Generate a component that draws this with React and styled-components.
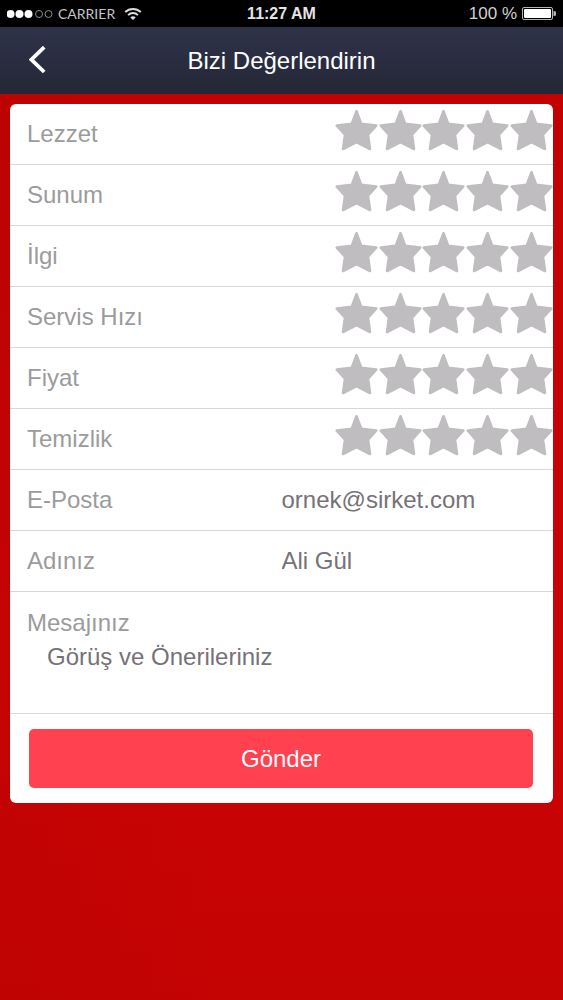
import React, { useState } from "react";
import styled, { createGlobalStyle } from "styled-components";

const GlobalStyle = createGlobalStyle`
  *, *::before, *::after { box-sizing: border-box; }
  body {
    margin: 0;
    background: #c60202;
    font-family: "Liberation Sans", Arial, sans-serif;
    font-size: 24px;
    line-height: 28px;
  }
`;

const Page = styled.div`
  display: flex;
  flex-direction: column;
  min-height: 100vh;
  background: linear-gradient(to right, rgba(150, 0, 0, 0.12), rgba(200, 0, 0, 0) 40%),
    linear-gradient(#c00202, #cb0303 70%, #c40303);
`;

const StatusBar = styled.div`
  display: grid;
  grid-template-columns: 1fr auto 1fr;
  align-items: center;
  height: 27px;
  padding: 0 7px;
  background: #000;
  color: #d2d2d2;
  font-size: 16px;
  line-height: 20px;
`;

const StatusGroup = styled.div`
  display: flex;
  align-items: center;
  justify-content: ${(p) => (p.$end ? "flex-end" : "flex-start")};
  gap: 5px;
`;

const Carrier = styled.span`
  padding-right: 4px;
  font-family: Lato, "Liberation Sans", sans-serif;
  font-size: 14px;
  color: #c4c4c4;
`;

const BatteryLevel = styled.span`
  font-size: 17px;
`;

const Clock = styled.time`
  font-weight: bold;
  color: #e4e4e4;
`;

const Header = styled.header`
  display: grid;
  grid-template-columns: 60px 1fr 60px;
  align-items: center;
  height: 67px;
  padding: 0 8px;
  background: linear-gradient(#2f334a, #242736);
`;

const BackButton = styled.button`
  display: flex;
  align-items: center;
  justify-content: center;
  height: 60px;
  padding: 0;
  border: 0;
  background: none;
  cursor: pointer;
`;

const Title = styled.h1`
  margin: 0;
  font-size: 24px;
  font-weight: normal;
  text-align: center;
  color: #fff;
`;

const Card = styled.form`
  margin: 10px;
  border-radius: 6px;
  overflow: hidden;
  background: #fff;
`;

const Row = styled.div`
  display: flex;
  align-items: center;
  height: 61px;
  border-bottom: 1px solid #d8d8da;
`;

const RatingRow = styled(Row).attrs({ role: "radiogroup" })`
  justify-content: space-between;
`;

const Caption = styled.span`
  padding-left: 17px;
  color: #9b9b9d;
`;

const FieldLabel = styled.label`
  flex: 1;
  padding-left: 17px;
  color: #9b9b9d;
`;

const TextField = styled.input`
  width: 50%;
  height: 60px;
  padding: 0;
  border: 0;
  outline: none;
  background: transparent;
  font: inherit;
  color: #69666b;
  &::placeholder { color: #757278; opacity: 1; }
`;

const Stars = styled.div`
  display: flex;
  width: 218px;
  padding-bottom: 8px;
`;

const StarLabel = styled.label`
  position: relative;
  display: flex;
  flex: 1;
  justify-content: center;
  cursor: pointer;
  color: ${(p) => (p.$on ? "#ff4150" : "#bfbdc0")};
`;

const StarRadio = styled.input`
  position: absolute;
  inset: 0;
  width: 100%;
  height: 100%;
  margin: 0;
  opacity: 0;
  cursor: pointer;
`;

const MessageBlock = styled.div`
  display: flex;
  flex-direction: column;
  height: 122px;
  padding-top: 17px;
  border-bottom: 1px solid #d9dcdf;
`;

const MessageLabel = styled.label`
  padding-left: 17px;
  color: #9b9b9d;
`;

const MessageArea = styled.textarea`
  height: 64px;
  padding: 6px 37px;
  border: 0;
  outline: none;
  background: transparent;
  font: inherit;
  color: #69666b;
  resize: none;
  &::placeholder { color: #757278; opacity: 1; }
`;

const Actions = styled.div`
  padding: 15px 20px 15px 19px;
`;

const SubmitButton = styled.button`
  display: block;
  width: 100%;
  height: 59px;
  border: 0;
  border-radius: 5px;
  background: #ff4150;
  color: #fff;
  font: inherit;
  cursor: pointer;
`;

function SignalDots() {
  return (
    <svg width="46" height="10" viewBox="0 0 46 10" aria-hidden="true">
      {[4, 13, 22].map((x) => (
        <circle key={x} cx={x - 0.5} cy="5" r="4" fill="#fff" />
      ))}
      {[32, 41.5].map((x) => (
        <circle key={x} cx={x} cy="5" r="3.5" fill="none" stroke="#8a8a8a" />
      ))}
    </svg>
  );
}

function WifiIcon() {
  return (
    <svg width="18" height="14" viewBox="0 0 18 14" aria-hidden="true">
      <g fill="none" stroke="#dcdcdc" strokeWidth="2">
        <path d="M1.2 5a11.3 11.3 0 0 1 15.6 0" />
        <path d="M4.1 8.100a7 7 0 0 1 9.8 0" />
      </g>
      <path d="M6.3 10.4a4 4 0 0 1 5.4 0L9 13z" fill="#dcdcdc" />
    </svg>
  );
}

function BatteryIcon() {
  return (
    <svg width="34" height="13" viewBox="0 0 34 13" aria-hidden="true">
      <rect x="0.5" y="0.5" width="30" height="12" rx="1.5" fill="none" stroke="#b5b5b5" />
      <rect x="2" y="2" width="27" height="9" rx="1" fill="#fff" />
      <path d="M31.5 4h1a1.5 1.5 0 0 1 1.5 1.5v2A1.5 1.5 0 0 1 32.5 9h-1z" fill="#b5b5b5" />
    </svg>
  );
}

function StarIcon() {
  return (
    <svg width="43" height="42" viewBox="0 0 43 42" aria-hidden="true">
      <path
        d="M21.5 2.3L26.2 14.8L41.2 16.6L33 25.6L35 40L21.500 33.1L8 40L10 25.6L1.8 16.6L16.8 14.8Z"
        fill="currentColor"
        stroke="currentColor"
        strokeWidth="2.6"
        strokeLinejoin="round"
      />
    </svg>
  );
}

function Rating({ name, label }) {
  const [value, setValue] = useState(0);
  return (
    <RatingRow aria-labelledby={`${name}-caption`}>
      <Caption id={`${name}-caption`}>{label}</Caption>
      <Stars>
        {[1, 2, 3, 4, 5].map((n) => (
          <StarLabel key={n} $on={n <= value}>
            <StarRadio
              type="radio"
              name={name}
              value={n}
              aria-label={`${label} ${n}`}
              checked={value === n}
              onChange={() => setValue(n)}
            />
            <StarIcon />
          </StarLabel>
        ))}
      </Stars>
    </RatingRow>
  );
}

const ratings = [
  ["lezzet", "Lezzet"],
  ["sunum", "Sunum"],
  ["ilgi", "İlgi"],
  ["servis", "Servis Hızı"],
  ["fiyat", "Fiyat"],
  ["temizlik", "Temizlik"],
];

export default function App() {
  return (
    <Page lang="tr">
      <GlobalStyle />
      <StatusBar>
        <StatusGroup>
          <SignalDots />
          <Carrier>CARRIER</Carrier>
          <WifiIcon />
        </StatusGroup>
        <Clock>11:27 AM</Clock>
        <StatusGroup $end>
          <BatteryLevel>100 %</BatteryLevel>
          <BatteryIcon />
        </StatusGroup>
      </StatusBar>
      <Header>
        <BackButton type="button" aria-label="Geri">
          <svg width="18" height="30" viewBox="0 0 18 30" aria-hidden="true">
            <path d="M15.2 1.2L2.4 13.6L15.2 26" fill="none" stroke="#fff" strokeWidth="3.8" />
          </svg>
        </BackButton>
        <Title>Bizi Değerlendirin</Title>
      </Header>
      <Card onSubmit={(e) => e.preventDefault()}>
        {ratings.map(([name, label]) => (
          <Rating key={name} name={name} label={label} />
        ))}
        <Row>
          <FieldLabel htmlFor="email">E-Posta</FieldLabel>
          <TextField id="email" type="email" placeholder="ornek@sirket.com" />
        </Row>
        <Row>
          <FieldLabel htmlFor="fullname">Adınız</FieldLabel>
          <TextField id="fullname" type="text" placeholder="Ali Gül" />
        </Row>
        <MessageBlock>
          <MessageLabel htmlFor="message">Mesajınız</MessageLabel>
          <MessageArea id="message" placeholder="Görüş ve Önerileriniz" />
        </MessageBlock>
        <Actions>
          <SubmitButton type="submit">Gönder</SubmitButton>
        </Actions>
      </Card>
    </Page>
  );
}
